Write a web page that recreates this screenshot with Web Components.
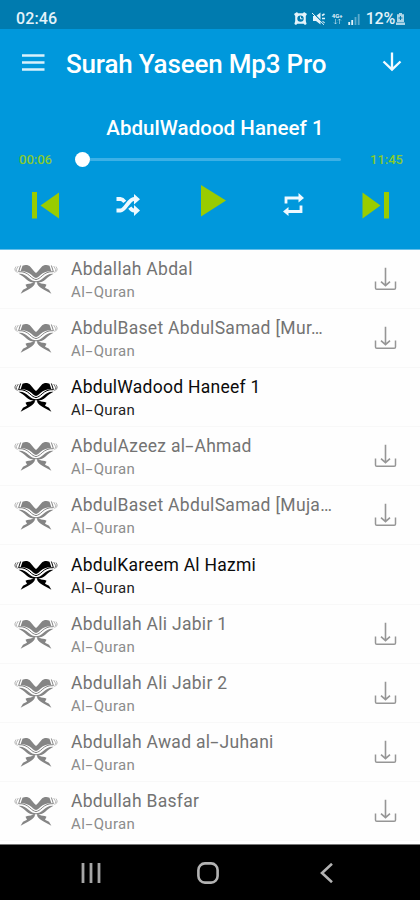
<!DOCTYPE html>
<html lang="en">
<head>
<meta charset="utf-8">
<title>Surah Yaseen Mp3 Pro</title>
<style>
html,body{margin:0;padding:0;background:#fff}
body{font-family:Roboto,"Liberation Sans",sans-serif}
</style>
</head>
<body>
<quran-app></quran-app>
<script>
const define = (name, html) => {
  const t = document.createElement('template');
  t.innerHTML = html;
  customElements.define(name, class extends HTMLElement {
    constructor() {
      super();
      this.attachShadow({mode: 'open'}).append(t.content.cloneNode(true));
    }
  });
};

define('status-bar', `<style>
:host{display:flex;height:29px;box-sizing:border-box;padding:8px 15px 0 16px;background:#007baf;color:#e4f3fa;justify-content:space-between;align-items:center}
.t{font-size:16px;font-weight:500;line-height:20px;letter-spacing:.1px}
.r{display:flex;align-items:center}
.b{font-size:16px;font-weight:500;line-height:20px;margin-left:6px;letter-spacing:-.2px}
svg{display:block}
.n{width:13px;margin-left:5px;text-align:center}
.g{font-size:6px;font-weight:700;line-height:6px;display:block}
</style>
<span class="t">02:46</span>
<span class="r">
<svg width="13" height="13" viewBox="0 0 13 13"><path fill="currentColor" fill-rule="evenodd" d="M0 2 3 0 4 1.2H9L10 0 13 2 11.8 4V9L12.6 12 11 13 9.6 11.8H3.4L2 13 .4 12 1.2 9V4ZM6.5 3.4A3.2 3.2 0 1 0 6.5 9.8 3.2 3.2 0 1 0 6.5 3.4Z"/><path d="M6.5 4.5V6.8H8.5" fill="none" stroke="currentColor"/></svg>
<svg style="margin-left:5px" width="14" height="13" viewBox="0 0 14 13"><path fill="currentColor" d="M1 4H4L8.500 .5V12.500L4 9H1Z"/><path d="M10 3.500 12.500 2M10 6.500H13M10 9.500 12.500 11" stroke="currentColor" stroke-width="1.500"/><path d="M1 1 12.500 12.500" stroke="#007baf" stroke-width="1.300"/><path d="M0 1 12 12.800" stroke="currentColor" stroke-width="1"/></svg>
<span class="n"><span class="g">4G+</span><svg width="13" height="6" viewBox="0 0 13 6"><path d="M4.500 0V5M3 3.500 4.500 5 6 3.500M8.500 5V0M7 1.500 8.500 0 10 1.500" fill="none" stroke="currentColor" stroke-width=".8" opacity=".65"/></svg></span>
<svg style="margin-left:4px" width="12" height="12" viewBox="0 0 12 12"><path d="M1.200 12V9M4.200 12V7" stroke="currentColor" stroke-width="1.800"/><path d="M7.500 12V4M10.700 12V1" stroke="currentColor" stroke-width="1.800" opacity=".4"/></svg>
<span class="b">12%</span>
<svg style="margin-left:1px" width="9" height="12" viewBox="0 0 9 12"><path fill="currentColor" opacity=".75" fill-rule="evenodd" d="M3 0H6V1.200H8V9H1V1.200H3ZM4 3V4.500H2.500V5.500H4V7H5V5.500H6.500V4.500H5V3ZM0 9.500H9V12H0Z"/></svg>
</span>`);

define('app-toolbar', `<style>
:host{display:flex;height:68px;align-items:center;padding:0 18px 0 22px;color:#fff}
svg{display:block;flex:none}
.t{flex:1;margin-left:21px;font-size:26px;line-height:34px;font-weight:500;letter-spacing:-.18px;white-space:nowrap;margin-top:1px}
</style>
<svg width="23" height="18" viewBox="0 0 23 18" style="margin-top:-3px"><path d="M0 2.500H22.500M0 9.500H22.500M0 16.500H22.500" stroke="#d9f1fb" stroke-width="2.300"/></svg>
<span class="t"><slot></slot></span>
<svg width="20" height="20" viewBox="0 0 20 20" style="margin-top:-3px"><path d="M10 .5V17.500M1.500 9.500 10 17.700 18.500 9.500" fill="none" stroke="#f3fbff" stroke-width="2.300"/></svg>`);

define('player-panel', `<style>
:host{display:flex;flex-direction:column;height:152px;color:#fff}
.t{margin:18px 0 0 10px;text-align:center;font-size:20.500px;line-height:26px;font-weight:500;white-space:nowrap;letter-spacing:.05px}
.s{display:flex;align-items:center;height:20px;margin:8px 17px 0 19px;font-size:13px;color:#87ca30}
.bar{width:266px;height:16px;display:flex;align-items:center;margin-left:22px}
.knob{width:15px;height:15px;border-radius:50%;background:#fff;flex:none}
.line{flex:1;height:3px;background:#3cb0e6;border-radius:0 2px 2px 0}
.time{width:34px;white-space:nowrap;font-weight:500}
.end{margin-left:auto;text-align:right}
.c{display:grid;grid-template-columns:28px 25px 26px 21px 28px;justify-content:space-between;padding:0 31px 0 32px;height:46px;margin-top:12.500px;align-items:center}
svg{display:block}
</style>
<div class="t">AbdulWadood Haneef 1</div>
<div class="s"><span class="time">00:06</span><span class="bar"><span class="knob"></span><span class="line"></span></span><span class="time end">11:45</span></div>
<div class="c">
<svg width="28" height="28" viewBox="0 0 28 28"><path fill="#99cc00" d="M0 1H5V27.500H0ZM27 1.500V27.500L8.500 14.500Z"/></svg>
<svg width="25" height="22" viewBox="0 0 25 22" style="margin-left:-1px"><path d="M.5 5H4.500C6.500 5 7.800 6.500 8.800 7.800M.5 16.500H4.500C9.500 16.500 12.500 5 18 5H19M13.800 13.600C15 15.300 16.300 16.500 18 16.500H19" fill="none" stroke="#eef9ff" stroke-width="3.800"/><path fill="#eef9ff" d="M18 0 24 5.200 18 10.500ZM18 11 24 16.500 18 22Z"/></svg>
<svg width="26" height="32" viewBox="0 0 26 32" style="margin:-8px 0 0 1px"><path fill="#99cc00" d="M0 0 25 15.500 0 31.500Z"/></svg>
<svg width="21" height="23" viewBox="0 0 21 23"><path d="M3 10.500V5H16M18 12.500V18.500H5" fill="none" stroke="#eef9ff" stroke-width="2.800"/><path fill="#eef9ff" d="M15.500 0 21 5 15.500 9.500ZM5.500 14 0 18.500 5.500 23Z"/></svg>
<svg width="28" height="28" viewBox="0 0 28 28" style="margin-left:1px"><path fill="#99cc00" d="M22 1H27V27.500H22ZM.5 1.500V27.500L18.500 14.500Z"/></svg>
</div>`);

define('book-icon', `<style>:host{display:block;width:44px;height:32px}svg{display:block}</style>
<svg width="44" height="32" viewBox="0 0 44 32">
<defs><g id="h">
<path fill="currentColor" d="M8.500 2.800C11 1.700 14.500 1.800 16.500 4 18.500 6.500 20.500 8.800 22 10V15C20.200 14.500 18.800 13 17.300 11.700 14.300 9.200 11 8 6.600 8.300Z"/>
<path fill="none" stroke="currentColor" stroke-width="1" d="M6.600 2.500 4.600 8.700C9.500 8.300 13 10.200 15.800 12.800 18 15 20 16.200 22 16.600"/>
<path fill="none" stroke="currentColor" stroke-width=".8" opacity=".7" d="M4.300 3 2.200 6.800 3.300 9.800M2 3.600 .8 6 1.500 8.500"/>
<path fill="currentColor" d="M4.500 10.800C8.500 10.300 12 12.300 14.500 14.700 17 17 19.500 18.200 22 18.300V19.300C18 19.700 14.800 18.700 12.500 16.500 10 13.800 7.500 12.300 4.500 10.800Z"/>
<path fill="currentColor" d="M20.800 18.500V21C19.500 23.500 16.800 25.200 14 26.800L6.600 30.800 9 26.800 13 24.800 11.500 21.800C13.500 20.300 16.500 21.500 18.500 19.800Z"/>
</g></defs>
<use href="#h"/><use href="#h" transform="matrix(-1 0 0 1 44 0)"/></svg>`);

define('reciter-row', `<style>
:host{display:flex;box-sizing:border-box;height:59.1px;padding:0 23px 0 14px;align-items:center;color:#737373;--i:#858585;border-bottom:1px solid #f8f8f8}
:host([ready]){color:#0b0b0b;--i:#000}
book-icon{color:var(--i);flex:none}
.x{flex:1;margin:1px 0 0 13px;white-space:nowrap;min-width:0}
.n{font-size:17.500px;line-height:22px;letter-spacing:.3px}
.q{font-size:15px;line-height:18px;margin-top:3px;letter-spacing:.35px;color:#8c8c8c}
:host([ready]) .n{letter-spacing:.26px}
:host([ready]) .q{color:#222}
:host([ready]) svg{display:none}
svg{display:block;flex:none}
</style>
<book-icon></book-icon>
<div class="x"><div class="n"><slot></slot></div><div class="q">Al<hy-phen>-</hy-phen>Quran</div></div>
<svg width="23" height="24" viewBox="0 0 23 24"><g fill="none" stroke="#969696"><path stroke-width="1.600" d="M11.500 .8V18M7 14.700 11.500 18.700 16 14.700"/><path stroke-width="1.500" d="M1.500 14.500V20.900Q1.500 22.200 2.800 22.200H20.200Q21.500 22.200 21.500 20.900V14.500"/></g></svg>`);

define('hy-phen', `<style>:host{display:inline-block;margin:0 2.200px 0 1.800px}span{display:inline-block;transform:scaleX(1.700)}</style><span><slot></slot></span>`);

define('nav-bar', `<style>
:host{display:grid;grid-template-columns:20px 22px 13px;justify-content:space-between;align-items:center;box-sizing:border-box;height:56px;padding:0 87px 0 81px;background:#000;border-top:1px solid #777}
svg{display:block}
.home{margin-left:-2.500px}
</style>
<svg width="20" height="20" viewBox="0 0 20 20"><path d="M2 0V20M10 0V20M18 0V20" stroke="#a6a6a6" stroke-width="2.800"/></svg>
<svg class="home" width="22" height="22" viewBox="0 0 22 22"><rect x="1.400" y="1.400" width="19.200" height="19.200" rx="6.500" fill="none" stroke="#b3b3b3" stroke-width="2.600"/></svg>
<svg width="13" height="20" viewBox="0 0 13 20"><path d="M12 .8 2 10 12 19.200" fill="none" stroke="#b3b3b3" stroke-width="2.600"/></svg>`);

define('quran-app', `<style>
:host{display:flex;flex-direction:column;width:420px;height:900px;overflow:hidden;background:#fff}
header{background:#0098dc;height:249px;flex:none;border-bottom:1px solid #66bfe9}
main{flex:1;min-height:0;overflow:hidden;background:#fefefe}
nav-bar{flex:none}
</style>
<header><status-bar></status-bar><app-toolbar>Surah Yaseen Mp3 Pro</app-toolbar><player-panel></player-panel></header>
<main>
<reciter-row>Abdallah Abdal</reciter-row>
<reciter-row>AbdulBaset AbdulSamad [Mur…</reciter-row>
<reciter-row ready>AbdulWadood Haneef 1</reciter-row>
<reciter-row>AbdulAzeez al<hy-phen>-</hy-phen>Ahmad</reciter-row>
<reciter-row>AbdulBaset AbdulSamad [Muja…</reciter-row>
<reciter-row ready>AbdulKareem Al Hazmi</reciter-row>
<reciter-row>Abdullah Ali Jabir 1</reciter-row>
<reciter-row>Abdullah Ali Jabir 2</reciter-row>
<reciter-row>Abdullah Awad al<hy-phen>-</hy-phen>Juhani</reciter-row>
<reciter-row>Abdullah Basfar</reciter-row>
</main>
<nav-bar></nav-bar>`);
</script>
</body>
</html>
